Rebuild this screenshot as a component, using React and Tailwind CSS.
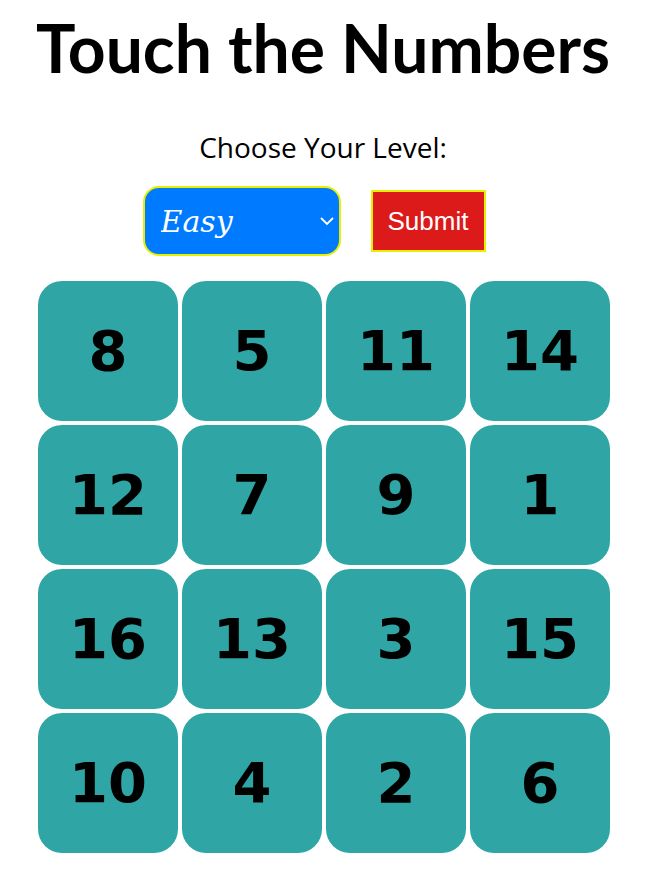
import React, { useState } from "react";

const numbers = [8, 5, 11, 14, 12, 7, 9, 1, 16, 13, 3, 15, 10, 4, 2, 6];

const App = () => {
  const [level, setLevel] = useState("easy");

  return (
    <div className="min-h-screen bg-white flex flex-col items-center font-['Lato',sans-serif] text-black">
      <h1 className="mt-[12px] text-[66px] leading-[72px] font-bold">Touch the Numbers</h1>
      <p className="mt-[47px] text-[28px] leading-[32px] font-['Open_Sans',sans-serif]">Choose Your Level:</p>
      <div className="mt-[23px] pr-[18px] flex items-center gap-[30px]">
        <div className="relative">
          <select
            value={level}
            onChange={e => setLevel(e.target.value)}
            className="appearance-none w-[198px] h-[70px] rounded-[16px] border-2 border-[#e6f000] bg-[#007bff] text-white pl-[16px] text-[30px] italic font-['DejaVu_Serif',serif] outline-none"
          >
            <option value="easy">Easy</option>
            <option value="medium">Medium</option>
            <option value="hard">Hard</option>
          </select>
          <svg className="absolute right-[6px] top-[30px] pointer-events-none" width="16" height="10" viewBox="0 0 16 10">
            <path d="M2 2 L8 8 L14 2" fill="none" stroke="white" strokeWidth="1.8" />
          </svg>
        </div>
        <button className="w-[115px] h-[62px] bg-[#dc1a1a] border-2 border-[#e6f000] text-white text-[26px] font-['Liberation_Sans',sans-serif]">
          Submit
        </button>
      </div>
      <div className="mt-[25px] pl-[2px] grid grid-cols-4 gap-[4px]">
        {numbers.map(n => (
          <button
            key={n}
            className="w-[140px] h-[140px] rounded-[24px] bg-[#2fa5a5] flex items-center justify-center text-[56px] font-bold font-['DejaVu_Sans',sans-serif]"
          >
            {n}
          </button>
        ))}
      </div>
    </div>
  );
};

export default App;
